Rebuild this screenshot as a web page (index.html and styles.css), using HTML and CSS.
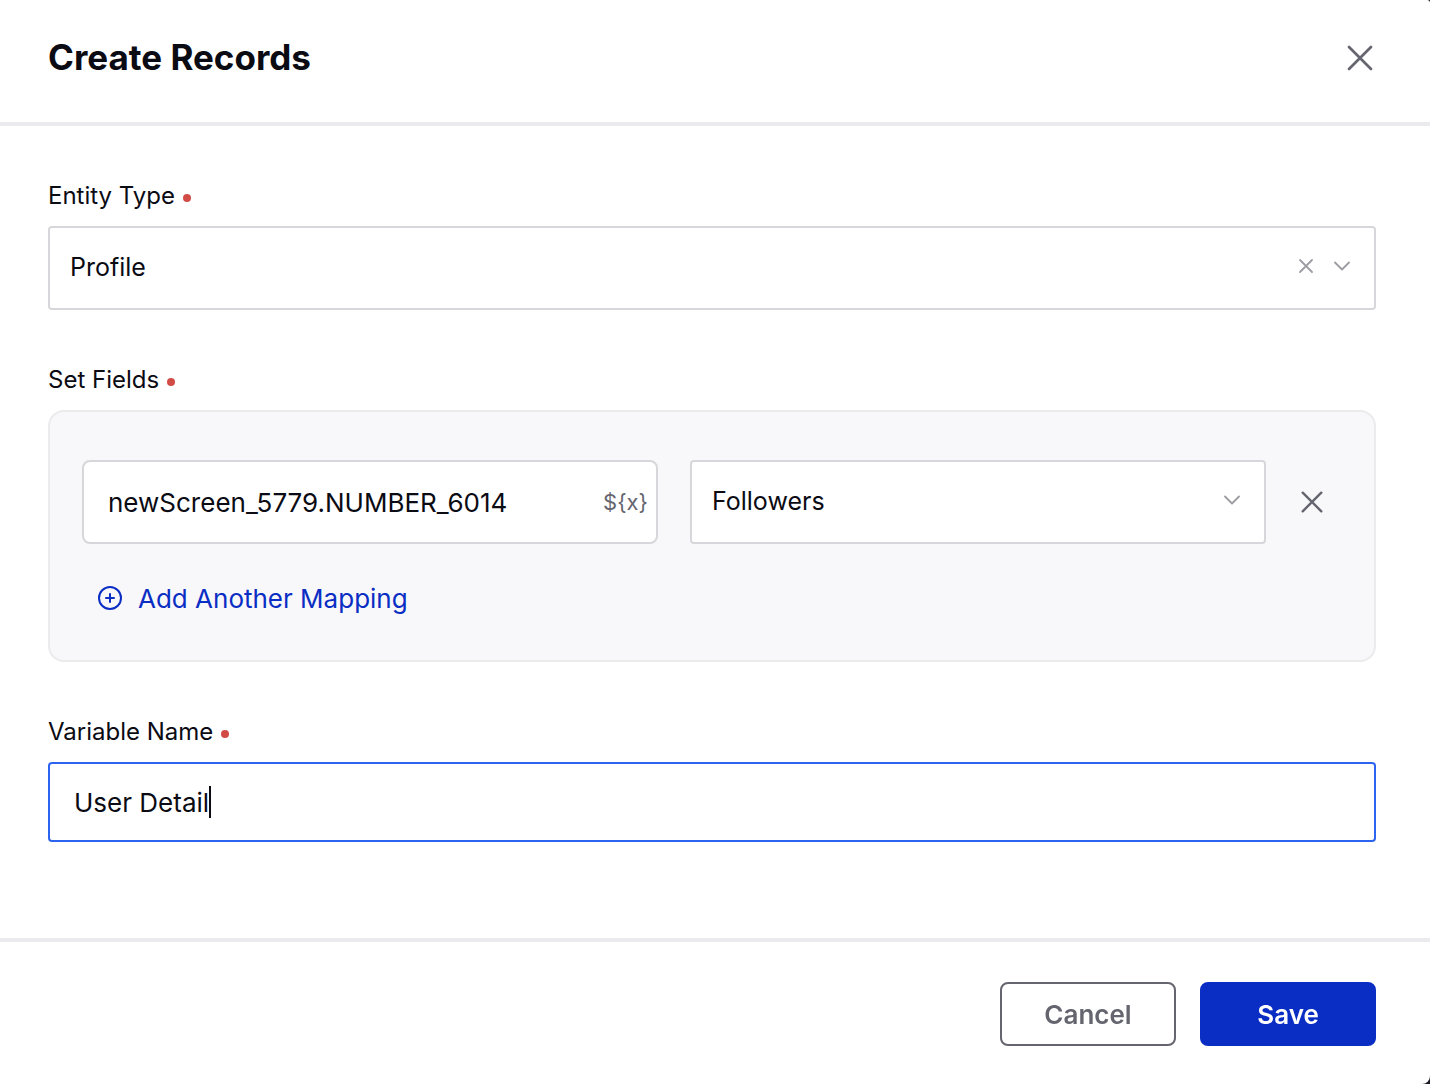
FILE: index.html
```html
<!DOCTYPE html>
<html lang="en">
<head>
<meta charset="utf-8">
<meta name="viewport" content="width=device-width, initial-scale=1">
<title>Create Records</title>
<link rel="stylesheet" href="styles.css">
</head>
<body>
<form class="modal">
  <header class="modal-header">
    <h1 class="modal-title">Create Records</h1>
    <button class="icon-button" type="button" aria-label="Close">
      <svg width="28" height="28" viewBox="0 0 28 28" stroke-width="2.700"><path d="M3 3 25 25M25 3 3 25"/></svg>
    </button>
  </header>

  <main class="modal-body">
    <div class="field">
      <label class="label" for="entity">Entity Type</label>
      <div class="select-box">
        <select class="control select" id="entity"><option>Profile</option></select>
        <span class="select-icons">
          <svg width="16" height="16" viewBox="0 0 16 16" stroke-width="1.800"><path d="M2 2 14 14M14 2 2 14"/></svg>
          <svg width="16" height="16" viewBox="0 0 16 16" stroke-width="1.800"><path d="M1 4.500 8 11.500 15 4.500"/></svg>
        </span>
      </div>
    </div>

    <fieldset class="field">
      <legend class="label">Set Fields</legend>
      <div class="panel">
        <div class="mapping">
          <div class="control value-box">
            <input class="value-input" type="text" aria-label="Value" value="newScreen_5779.NUMBER_6014">
            <button class="variable-button" type="button">${x}</button>
          </div>
          <div class="select-box">
            <select class="control select" aria-label="Field"><option>Followers</option></select>
            <span class="select-icons">
              <svg width="16" height="16" viewBox="0 0 16 16" stroke-width="1.800"><path d="M1 4.500 8 11.500 15 4.500"/></svg>
            </span>
          </div>
          <button class="icon-button" type="button" aria-label="Remove mapping">
            <svg width="28" height="28" viewBox="0 0 28 28" stroke-width="2.400"><path d="M4.700 4.700 23.300 23.300M23.300 4.700 4.700 23.300"/></svg>
          </button>
        </div>
        <button class="add-button" type="button">
          <svg width="24" height="26" viewBox="0 0 24 26" stroke-width="2"><circle cx="12" cy="12" r="11"/><path d="M12 8V16M8 12H16"/></svg>
          Add Another Mapping
        </button>
      </div>
    </fieldset>

    <div class="field">
      <label class="label" for="variable">Variable Name</label>
      <div class="control text-box">
        <input class="text-input" id="variable" type="text" value="User Detail" autofocus>
        <span class="caret"></span>
      </div>
    </div>
  </main>

  <footer class="modal-footer">
    <button class="button" type="button">Cancel</button>
    <button class="button primary" type="submit">Save</button>
  </footer>
</form>
</body>
</html>
```
FILE: styles.css
```css
* {
  box-sizing: border-box;
}

body {
  margin: 0;
  background: #1b1b26;
  color: #0b0b14;
  font-family: Inter, "Liberation Sans", sans-serif;
  font-size: 26px;
}

button,
input,
select {
  font: inherit;
  color: inherit;
}

button {
  padding: 0;
  border: 0;
  background: none;
  cursor: pointer;
}

svg {
  display: block;
  flex: none;
  fill: none;
  stroke: currentColor;
  stroke-linecap: round;
  stroke-linejoin: round;
}

.modal {
  display: flex;
  flex-direction: column;
  min-height: 100vh;
  background: #fff;
  border-radius: 0 3px 8px 0;
}

.modal-header {
  display: flex;
  align-items: center;
  justify-content: space-between;
  padding: 38px 56px 44px 48px;
  border-bottom: 4px solid #ebebee;
}

.modal-title {
  margin: 0;
  padding-bottom: 2px;
  font-size: 35px;
  line-height: 38px;
  font-weight: 700;
}

.icon-button {
  width: 28px;
  height: 28px;
  color: #65656f;
}

.modal-body {
  display: flex;
  flex: 1;
  flex-direction: column;
  gap: 54px;
  padding: 54px 54px 96px 48px;
}

.field {
  min-width: 0;
  margin: 0;
  padding: 0;
  border: 0;
}

.label {
  display: flex;
  align-items: center;
  gap: 8px;
  margin-bottom: 14px;
  padding: 0;
  font-size: 24px;
  line-height: 32px;
}

.label::after {
  content: "";
  width: 8px;
  height: 8px;
  margin-top: 4px;
  border-radius: 50%;
  background: #d14c47;
}

.control {
  display: block;
  width: 100%;
  height: 84px;
  border: 2px solid #d7d7db;
  border-radius: 4px;
  background: #fff;
  outline: 0;
}

.select-box {
  display: grid;
  align-items: center;
}

.select-box > * {
  grid-area: 1 / 1;
}

.select {
  padding: 0 96px 2px 20px;
  font-size: 25px;
  appearance: none;
}

.select-icons {
  display: flex;
  gap: 20px;
  justify-self: end;
  padding: 0 26px 4px 0;
  color: #9c9ca3;
  pointer-events: none;
}

.panel {
  display: flex;
  flex-direction: column;
  align-items: flex-start;
  gap: 38px;
  padding: 48px 48px 44px 32px;
  border: 2px solid #ebebee;
  border-radius: 16px;
  background: #f8f8fb;
}

.mapping {
  display: grid;
  grid-template-columns: 1fr 1fr 28px;
  align-items: center;
  gap: 32px;
  width: 100%;
}

.value-box {
  display: flex;
  align-items: center;
  padding: 0 8px 0 24px;
  border-radius: 8px;
}

.value-input {
  flex: 1;
  min-width: 0;
  padding: 0;
  border: 0;
  outline: 0;
}

.variable-button {
  color: #65656f;
  font-size: 22px;
}

.add-button {
  display: flex;
  align-items: center;
  gap: 16px;
  margin-left: 16px;
  color: #0a2dc4;
  line-height: 34px;
}

.text-box {
  display: flex;
  align-items: center;
  height: 80px;
  padding: 0 24px;
}

.text-box:focus-within {
  border-color: #2c64f0;
}

.text-input {
  max-width: 100%;
  padding: 0;
  border: 0;
  outline: 0;
  caret-color: transparent;
  field-sizing: content;
}

.caret {
  width: 2px;
  height: 32px;
  background: #0b0b14;
  visibility: hidden;
}

.text-input:focus + .caret {
  visibility: visible;
}

.modal-footer {
  display: flex;
  justify-content: flex-end;
  gap: 24px;
  padding: 40px 54px 38px 48px;
  border-top: 4px solid #ebebee;
}

.button {
  width: 176px;
  height: 64px;
  border: 2px solid #65656f;
  border-radius: 8px;
  color: #65656f;
  font-weight: 600;
}

.primary {
  border-color: #0a2dc4;
  background: #0a2dc4;
  color: #fff;
}
```
